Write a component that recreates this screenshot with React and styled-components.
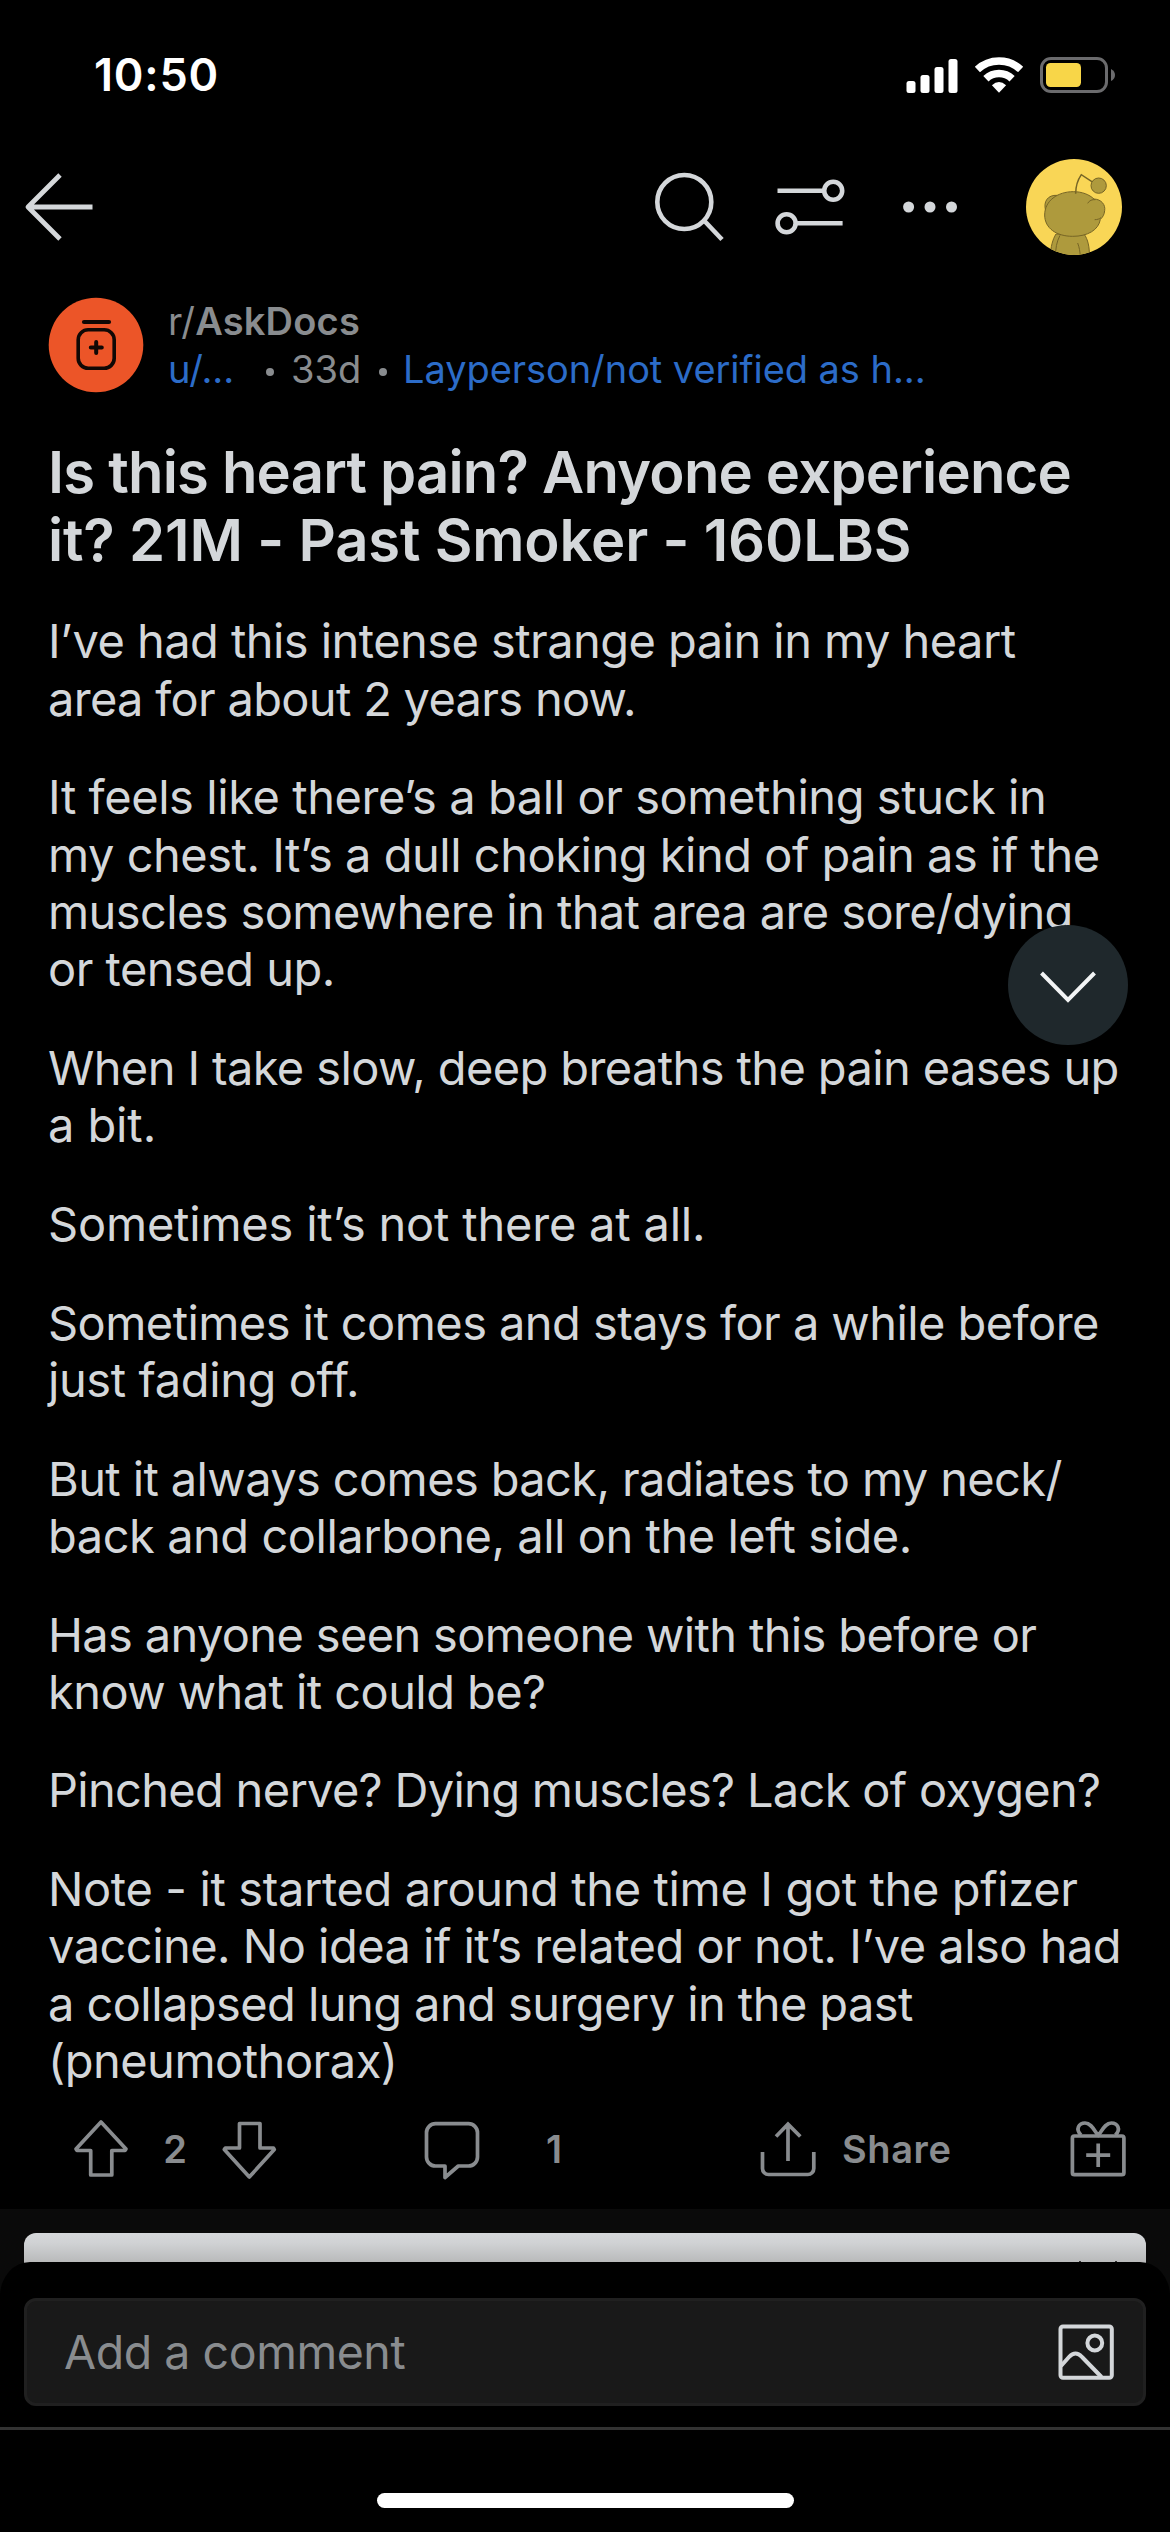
import React from 'react'
import styled, { createGlobalStyle, ThemeProvider } from 'styled-components'

const theme = {
    bg: '#000000',
    text: '#d4d7da',
    meta: '#898c8f',
    link: '#2c6cc8',
    strip: '#0a0a0a',
    field: '#191919',
    fieldBorder: '#202020',
    hairline: '#323232',
    battery: '#f8d648',
}

const GlobalStyle = createGlobalStyle`
* { box-sizing: border-box; }
body {
    margin: 0;
    background: #000;
    font-family: Inter, "Liberation Sans", sans-serif;
}
svg { display: block; flex: none; }`

const Screen = styled.div`
position: relative;
display: flex;
flex-direction: column;
width: 1170px;
height: 2532px;
overflow: hidden;
background: ${props => props.theme.bg};
color: ${props => props.theme.text};`

const StatusBar = styled.div`
display: flex;
flex: none;
align-items: center;
justify-content: space-between;
height: 149px;
padding: 0 54px 0 94px;`

const Clock = styled.span`
font-size: 45px;
font-weight: 600;
letter-spacing: 0.8px;
color: #fff;`

const StatusIcons = styled.div`
display: flex;
align-items: center;
gap: 16px;`

const NavBar = styled.div`
display: flex;
flex: none;
align-items: center;
justify-content: space-between;
height: 116px;
padding: 0 48px 0 24px;`

const NavActions = styled.div`
display: flex;
align-items: center;`

const NavItem = styled.div`
margin-left: ${props => props.$gap || 0}px;`

const PostHeader = styled.div`
display: flex;
flex: none;
gap: 24px;
padding: 32px 48px 0;
height: 128px;`

const Meta = styled.div`
font-size: 38px;
line-height: 48px;
color: ${props => props.theme.meta};`

const MetaRow = styled.div`
display: flex;
align-items: center;
white-space: nowrap;
letter-spacing: ${props => props.$track || 0}px;`

const Strong = styled.span`
font-weight: 600;`

const User = styled.span`
width: 98px;
color: ${props => props.theme.link};`

const Age = styled.span`
width: 88px;
padding-left: 17px;`

const Flair = styled.span`
padding-left: 16px;
letter-spacing: -0.06px;
color: ${props => props.theme.link};`

const Dot = styled.i`
flex: none;
width: 8px;
height: 8px;
margin-top: 5px;
margin-left: ${props => props.$left || 0}px;
border-radius: 50%;
background: ${props => props.theme.meta};`

const Title = styled.h1`
flex: none;
margin: 45px 0 0 48px;
font-size: 58px;
font-weight: 600;
line-height: 68px;`

const Body = styled.div`
display: flex;
flex: none;
flex-direction: column;
gap: 41.4px;
margin: 38.3px 0 0 48px;
font-size: 47px;
line-height: 57.3px;`

const Paragraph = styled.p`
margin: 0;`

const Line = styled.span`
display: block;
white-space: nowrap;
letter-spacing: ${props => props.$track}px;`

const Actions = styled.div`
display: grid;
flex: none;
grid-template-columns: 351px 336px 310px auto;
align-items: center;
height: 119.5px;
padding-left: 72px;
font-size: 38px;
font-weight: 600;
color: ${props => props.theme.meta};`

const Action = styled.div`
display: flex;
align-items: center;`

const Count = styled.span`
width: ${props => props.$width}px;
text-align: center;`

const ShareLabel = styled.span`
padding-left: 25px;
letter-spacing: 0.6px;`

const Strip = styled.div`
flex: none;
height: 84px;
padding: 24px 24px 0;
background: ${props => props.theme.strip};`

const AdCard = styled.div`
display: flex;
justify-content: flex-end;
gap: 34px;
height: 50px;
padding: 28px 29px 0 0;
border-radius: 12px 12px 0 0;
background: linear-gradient(#d6d8da 0, #d0d2d4 10px, #b9babb 29px);`

const AdTick = styled.i`
width: 2px;
height: 2px;
background: #333;`

const Sheet = styled.div`
position: relative;
flex: none;
height: 168px;
margin-top: -31px;
padding: 36px 24px 0;
border-bottom: 3px solid ${props => props.theme.hairline};
border-radius: 30px 30px 0 0 / 34px 34px 0 0;
background: ${props => props.theme.bg};`

const Composer = styled.div`
display: flex;
align-items: center;
justify-content: space-between;
height: 108px;
padding: 0 28px 0 37px;
border: 3px solid ${props => props.theme.fieldBorder};
border-radius: 12px;
background: ${props => props.theme.field};
color: ${props => props.theme.meta};`

const Placeholder = styled.span`
font-size: 46.5px;
letter-spacing: -0.45px;`

const HomeArea = styled.div`
display: flex;
flex: 1;
justify-content: center;
padding-top: 63px;`

const HomeBar = styled.div`
width: 417px;
height: 15px;
border-radius: 8px;
background: #fff;`

// floats over the text, jumps to the next comment
const JumpButton = styled.div`
position: absolute;
top: 925px;
left: 1008px;
display: flex;
align-items: center;
justify-content: center;
width: 120px;
height: 120px;
padding-top: 3px;
border-radius: 50%;
background: #1f282c;`

const Stroke = ({ w, h, width = 3.7, color = theme.meta, join = 'round', children }) =>
    <svg width={w} height={h} viewBox={`0 0 ${w} ${h}`} fill="none"
        stroke={color} strokeWidth={width} strokeLinejoin={join}>
        {children}
    </svg>

const Signal = () => <svg width="52" height="36" fill="#fff">
    <rect x="0.5" y="24" width="9" height="12" rx="2.5" />
    <rect x="14.5" y="18" width="9" height="18" rx="2.5" />
    <rect x="28.5" y="10" width="9" height="26" rx="2.5" />
    <rect x="42.5" y="2" width="9" height="34" rx="2.5" />
</svg>

const Wifi = () => <svg width="50" height="38" fill="none" stroke="#fff" strokeWidth="7.6">
    <path d="M3.4 13.5A31.7 31.7 0 0 1 46.6 13.5" />
    <path d="M11.9 22.7A19.2 19.2 0 0 1 38.1 22.7" />
    <path d="M17.9 29.2Q25 23 32.1 29.2L25 36.7Z" fill="#fff" stroke="none" />
</svg>

const Battery = () => <svg width="76" height="36">
    <rect x="1.5" y="1.5" width="65" height="33" rx="9.5" fill="none" stroke="#6b6b6d" strokeWidth="3" />
    <rect x="6" y="6" width="35" height="24" rx="4.5" fill={theme.battery} />
    <path d="M71 12Q75 14 75 18T71 24Z" fill="#6b6b6d" />
</svg>

const Back = () => <Stroke w={70} h={68} width={4.8} color={theme.text}>
    <path d="M36 2L4 34l32 32M4 34h64.5" />
</Stroke>

const Search = () => <Stroke w={70} h={70} width={4.6} color={theme.text}>
    <circle cx="29.3" cy="30" r="27" />
    <path d="M49.5 49L67 67.5" />
</Stroke>

const Filter = () => <Stroke w={70} h={58} width={4.6} color={theme.text}>
    <path d="M2.5 12.7H48M22 45.3H67.6" />
    <circle cx="58.2" cy="12.7" r="9" />
    <circle cx="11.6" cy="45.3" r="9" />
</Stroke>

const More = () => <svg width="54" height="12" fill={theme.text}>
    <circle cx="5.6" cy="6" r="5.5" />
    <circle cx="27" cy="6" r="5.5" />
    <circle cx="48.5" cy="6" r="5.5" />
</svg>

const Avatar = () => <svg width="96" height="96" viewBox="18 27 288 288">
    <clipPath id="face"><circle cx="162" cy="171" r="144" /></clipPath>
    <circle cx="162" cy="171" r="144" fill="#f9d656" />
    <g clipPath="url(#face)" fill="#ae9a3d" stroke="#766526" strokeWidth="3">
        <path d="M91 320C92 290 98 268 108 252H192C204 268 209 292 208 320Z" />
        <path d="M120 256C110 275 106 296 107 320M173 279C178 292 180 305 181 320" fill="none" />
        <path d="M77 182C69 155 83 134 112 136Z" />
        <path d="M74 195C74 152 113 125 160 125C187 125 208 134 222 147C244 148 257 164 254 182C253 194 248 202 241 208C236 240 203 259 158 259C110 259 74 235 74 195Z" />
        <path d="M203 160C208 151 217 148 226 149M224 209C232 209 238 207 243 203" fill="none" />
        <path d="M167 131C167 108 173 90 184 74L219 97" fill="none" strokeWidth="4.5" />
        <circle cx="236" cy="107" r="23" />
    </g>
</svg>

const Community = () => <svg width="96" height="96" fill="none" stroke="#100805" strokeLinecap="round">
    <circle cx="48" cy="48" r="47.3" fill="#ec5528" stroke="none" />
    <path d="M36 25H61" strokeWidth="4.2" />
    <rect x="30.2" y="32.8" width="36" height="38.5" rx="10" strokeWidth="3.6" />
    <path d="M48.2 45v11M42.8 50.5h11" strokeWidth="4" />
</svg>

const Upvote = () => <Stroke w={58} h={62}>
    <path d="M29 4L54 31L53 32.5H39.8V57H18.7V32.5H5L4 31Z" />
</Stroke>

const Downvote = () => <Stroke w={58} h={62}>
    <path d="M19.5 5.5H40V30H53.5L54.3 31.5L29.3 59L4.3 31.5L5.3 30H19.5Z" />
</Stroke>

const Comment = () => <Stroke w={58} h={62}>
    <path d="M12.5 5.7H45.5a9 9 0 0 1 9 9V39a9 9 0 0 1-9 9H35.3L22 59.5V48H12.5a9 9 0 0 1-9-9V14.7a9 9 0 0 1 9-9Z" />
</Stroke>

const Share = () => <Stroke w={58} h={62} join="miter">
    <path d="M3.5 34V50.5a6 6 0 0 0 6 6H48.8a6 6 0 0 0 6-6V34M29 43V6.5M17 18.5L29 6.2L41.3 18.5" />
</Stroke>

const Gift = () => <Stroke w={58} h={62}>
    <rect x="3.4" y="18" width="51.5" height="38.7" rx="2" />
    <path d="M29.2 25.5V49M17.2 37.2H41.2" />
    <path d="M12 17C6 11 10 5 16 5C22 5 25 12 29.2 17.5C33.4 12 36.4 5 42.4 5C48.4 5 52.4 11 46.4 17" />
</Stroke>

const Picture = () => <Stroke w={58} h={58} width={4} color={theme.text}>
    <rect x="3.5" y="3.5" width="51.3" height="51.3" rx="2.5" />
    <circle cx="37.8" cy="20" r="7.4" />
    <path d="M4 43L12 34Q18.5 27 25 34L44.5 54" />
</Stroke>

const Chevron = () => <Stroke w={60} h={34} width={4} color="#f2f4f5" join="miter">
    <path d="M3.5 3L30 29.8L56.5 3" />
</Stroke>

const title = [
    ['Is this heart pain? Anyone experience', -0.8],
    ['it? 21M - Past Smoker - 160LBS', -0.17],
]

const paragraphs = [
    [
        ['I’ve had this intense strange pain in my heart', -0.55],
        ['area for about 2 years now.', -0.7],
    ],
    [
        ['It feels like there’s a ball or something stuck in', -0.43],
        ['my chest. It’s a dull choking kind of pain as if the', -0.49],
        ['muscles somewhere in that area are sore/dying', -0.61],
        ['or tensed up.', -0.52],
    ],
    [
        ['When I take slow, deep breaths the pain eases up', -0.62],
        ['a bit.', -0.1],
    ],
    [['Sometimes it’s not there at all.', -0.21]],
    [
        ['Sometimes it comes and stays for a while before', -0.57],
        ['just fading off.', -0.4],
    ],
    [
        ['But it always comes back, radiates to my neck/', -0.62],
        ['back and collarbone, all on the left side.', -0.47],
    ],
    [
        ['Has anyone seen someone with this before or', -0.65],
        ['know what it could be?', -0.58],
    ],
    [['Pinched nerve? Dying muscles? Lack of oxygen?', -0.7]],
    [
        ['Note - it started around the time I got the pfizer', -0.37],
        ['vaccine. No idea if it’s related or not. I’ve also had', -0.53],
        ['a collapsed lung and surgery in the past', -0.57],
        ['(pneumothorax)', -0.5],
    ],
]

const Lines = ({ lines }) => lines.map(([text, track]) =>
    <Line key={text} $track={track}>{text}</Line>)

export default function App() {
    return <ThemeProvider theme={theme}>
        <GlobalStyle />
        <Screen>
            <StatusBar>
                <Clock>10:50</Clock>
                <StatusIcons>
                    <Signal />
                    <Wifi />
                    <Battery />
                </StatusIcons>
            </StatusBar>
            <NavBar>
                <Back />
                <NavActions>
                    <NavItem><Search /></NavItem>
                    <NavItem $gap={50}><Filter /></NavItem>
                    <NavItem $gap={58}><More /></NavItem>
                    <NavItem $gap={69}><Avatar /></NavItem>
                </NavActions>
            </NavBar>
            <PostHeader>
                <Community />
                <Meta>
                    <MetaRow $track={0.2}>r/<Strong>AskDocs</Strong></MetaRow>
                    <MetaRow>
                        <User>u/...</User>
                        <Dot />
                        <Age>33d</Age>
                        <Dot $left={17} />
                        <Flair>Layperson/not verified as h...</Flair>
                    </MetaRow>
                </Meta>
            </PostHeader>
            <Title><Lines lines={title} /></Title>
            <Body>
                {paragraphs.map((lines, i) =>
                    <Paragraph key={i}><Lines lines={lines} /></Paragraph>)}
            </Body>
            <Actions>
                <Action>
                    <Upvote />
                    <Count $width={90}>2</Count>
                    <Downvote />
                </Action>
                <Action>
                    <Comment />
                    <Count $width={146}>1</Count>
                </Action>
                <Action>
                    <Share />
                    <ShareLabel>Share</ShareLabel>
                </Action>
                <Action><Gift /></Action>
            </Actions>
            <Strip>
                <AdCard>
                    <AdTick />
                    <AdTick />
                </AdCard>
            </Strip>
            <Sheet>
                <Composer>
                    <Placeholder>Add a comment</Placeholder>
                    <Picture />
                </Composer>
            </Sheet>
            <HomeArea><HomeBar /></HomeArea>
            <JumpButton><Chevron /></JumpButton>
        </Screen>
    </ThemeProvider>
}
